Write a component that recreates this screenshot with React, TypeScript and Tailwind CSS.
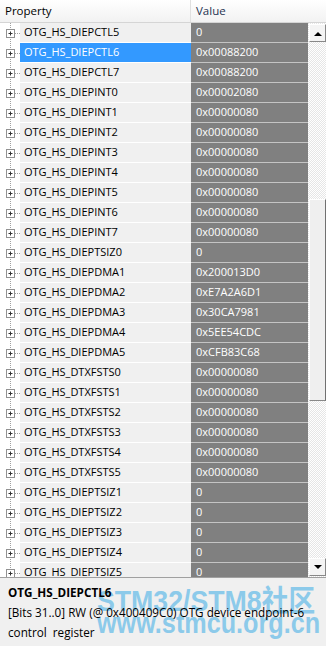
import React from "react";

const rows: [string, string][] = [
  ["OTG_HS_DIEPCTL5", "0"],
  ["OTG_HS_DIEPCTL6", "0x00088200"],
  ["OTG_HS_DIEPCTL7", "0x00088200"],
  ["OTG_HS_DIEPINT0", "0x00002080"],
  ["OTG_HS_DIEPINT1", "0x00000080"],
  ["OTG_HS_DIEPINT2", "0x00000080"],
  ["OTG_HS_DIEPINT3", "0x00000080"],
  ["OTG_HS_DIEPINT4", "0x00000080"],
  ["OTG_HS_DIEPINT5", "0x00000080"],
  ["OTG_HS_DIEPINT6", "0x00000080"],
  ["OTG_HS_DIEPINT7", "0x00000080"],
  ["OTG_HS_DIEPTSIZ0", "0"],
  ["OTG_HS_DIEPDMA1", "0x200013D0"],
  ["OTG_HS_DIEPDMA2", "0xE7A2A6D1"],
  ["OTG_HS_DIEPDMA3", "0x30CA7981"],
  ["OTG_HS_DIEPDMA4", "0x5EE54CDC"],
  ["OTG_HS_DIEPDMA5", "0xCFB83C68"],
  ["OTG_HS_DTXFSTS0", "0x00000080"],
  ["OTG_HS_DTXFSTS1", "0x00000080"],
  ["OTG_HS_DTXFSTS2", "0x00000080"],
  ["OTG_HS_DTXFSTS3", "0x00000080"],
  ["OTG_HS_DTXFSTS4", "0x00000080"],
  ["OTG_HS_DTXFSTS5", "0x00000080"],
  ["OTG_HS_DIEPTSIZ1", "0"],
  ["OTG_HS_DIEPTSIZ2", "0"],
  ["OTG_HS_DIEPTSIZ3", "0"],
  ["OTG_HS_DIEPTSIZ4", "0"],
  ["OTG_HS_DIEPTSIZ5", "0"],
];

function PlusBox() {
  return (
    <svg width="20" height="20" viewBox="0 0 20 20" className="block">
      <line x1="10.5" y1="0" x2="10.5" y2="20" stroke="#a0a0a0" strokeDasharray="1 1" />
      <line x1="15" y1="10.5" x2="20" y2="10.5" stroke="#a0a0a0" strokeDasharray="1 1" />
      <rect x="6.5" y="6.5" width="8" height="8" fill="#fff" stroke="#919191" />
      <line x1="8.5" y1="10.5" x2="12.5" y2="10.5" stroke="#333" />
      <line x1="10.5" y1="8.5" x2="10.5" y2="12.5" stroke="#333" />
    </svg>
  );
}

export default function App() {
  return (
    <div
      className="w-[326px] h-[646px] bg-white flex flex-col overflow-hidden text-[11px] text-black"
      style={{ fontFamily: '"Open Sans", "Noto Sans CJK SC", sans-serif' }}
    >
      {/* header */}
      <div className="h-[23px] flex shrink-0 bg-gradient-to-b from-white to-[#f2f2f2] border-b border-[#d5d5d5] text-[11.5px]">
        <div className="w-[191px] flex items-center pl-[5px] border-r border-[#e0e0e0]">Property</div>
        <div className="flex-1 flex items-center pl-[5px] text-[#1e3250]">Value</div>
      </div>
      {/* body */}
      <div className="h-[554px] flex shrink-0 overflow-hidden">
        <div className="flex-1 flex flex-col">
          {rows.map(([n, v], i) => {
            const sel = i === 1;
            return (
              <div key={n} className="h-[20px] flex shrink-0">
                <div className="w-[20px] shrink-0">
                  <PlusBox />
                </div>
                <div
                  className={
                    "w-[171px] shrink-0 flex items-center pl-[4px] border-b border-white " +
                    (sel ? "bg-[#3399ff] text-white" : "bg-[#f0f0f0]")
                  }
                >
                  {n}
                </div>
                <div className="flex-1 flex items-center pl-[5px] bg-[#808080] text-white border-b border-[#c4c4c4]">
                  {v}
                </div>
              </div>
            );
          })}
        </div>
        {/* scrollbar */}
        <div
          className="w-[18px] shrink-0 flex flex-col"
          style={{
            backgroundColor: "#f4f4f4",
            backgroundImage:
              "repeating-conic-gradient(#ffffff 0% 25%, #e6e6e6 0% 50%)",
            backgroundSize: "2px 2px",
          }}
        >
          <div className="h-[18px] mt-[1px] ml-[1px] flex items-center justify-center bg-[#f4f4f4] border border-white border-r-[#888] border-b-[#888]">
            <svg width="8" height="5" viewBox="0 0 8 5"><path d="M0 5 L4 1 L8 5 Z" fill="#000" /></svg>
          </div>
          <div className="h-[157px]" />
          <div className="h-[202px] ml-[1px] bg-[#efefef] border border-white border-r-[#707070] border-b-[#888]" />
          <div className="flex-1" />
          <div className="h-[18px] mb-[1px] ml-[1px] flex items-center justify-center bg-[#f4f4f4] border border-white border-r-[#888] border-b-[#888]">
            <svg width="8" height="5" viewBox="0 0 8 5"><path d="M0 0 L4 4 L8 0 Z" fill="#000" /></svg>
          </div>
        </div>
      </div>
      {/* description */}
      <div className="relative flex-1 bg-[#f0f0f0] border-t border-[#a0a0a0] px-[8px] pt-[4px] overflow-hidden text-[11.7px]">
        <div
          className="absolute left-[97px] top-[8px] text-[30px] font-bold leading-[30px] text-[#8ccaea] whitespace-nowrap origin-left scale-x-[0.89]"
          style={{ fontFamily: '"Liberation Sans", "Noto Sans CJK SC", sans-serif' }}
        >
          STM32/STM8社区
        </div>
        <div
          className="absolute left-[97px] top-[30px] text-[30px] font-bold leading-[30px] text-[#8ccaea] whitespace-nowrap origin-left scale-x-[0.84]"
          style={{ fontFamily: '"Liberation Sans", sans-serif' }}
        >
          www.stmcu.org.cn
        </div>
        <div className="relative font-bold h-[20px] leading-[20px]">OTG_HS_DIEPCTL6</div>
        <div className="relative h-[20px] leading-[20px] whitespace-nowrap">[Bits 31..0] RW (@ 0x400409C0) OTG device endpoint-6</div>
        <div className="relative h-[20px] leading-[20px] whitespace-pre">control  register</div>
      </div>
    </div>
  );
}
